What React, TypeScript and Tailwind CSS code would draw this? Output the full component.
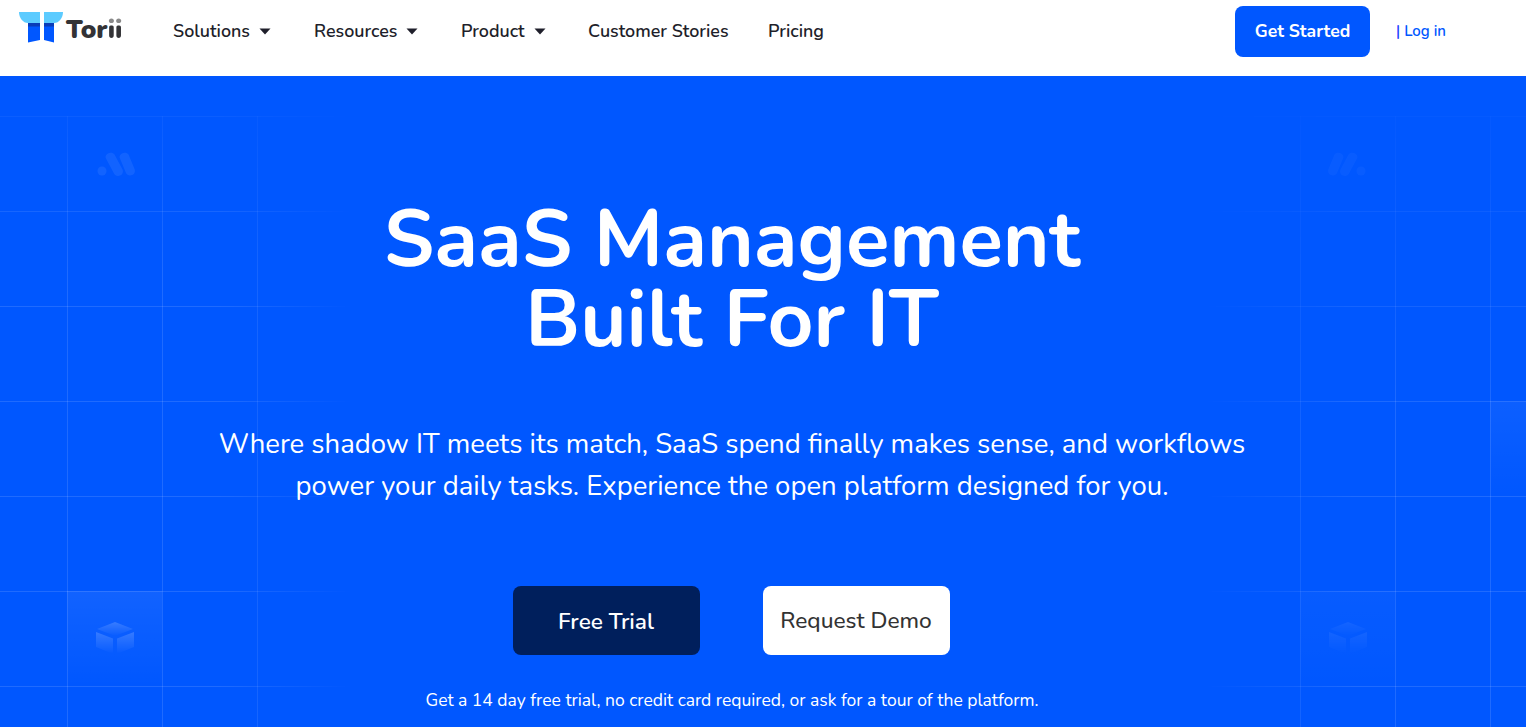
import React from 'react';

const navItems = [
  { label: 'Solutions', caret: true, className: 'w-[141px]' },
  { label: 'Resources', caret: true, className: 'w-[147px]' },
  { label: 'Product', caret: true, className: 'w-[127px]' },
  { label: 'Customer Stories', caret: false, className: 'w-[180px]' },
  { label: 'Pricing', caret: false, className: '' },
];

const Caret: React.FC = () => (
  <svg width="12" height="7" viewBox="0 0 12 7" className="ml-[9px] mt-[1px]">
    <path d="M0.5 0.5h11L6 6.5z" fill="#1f1f2b" />
  </svg>
);

const Logo: React.FC = () => (
  <svg width="45" height="31" viewBox="0 0 45 31" className="block">
    <path d="M9 9h12v19l-12 2.500z" fill="#0057ff" />
    <path d="M25 9h10v21.500L25 28z" fill="#0057ff" />
    <path d="M0 0h21v11H9C4 11 0 6 0 0z" fill="#5ccbff" />
    <path d="M25 0h19c0 6-4 11-9 11H25z" fill="#5ccbff" />
    <path d="M9 11h12v3.500H9zM25 11h10v3.500H25z" fill="#0a3cb8" />
  </svg>
);

const DotsIcon: React.FC<{ mirror?: boolean; className: string }> = ({ mirror, className }) => (
  <svg width="38" height="24" viewBox="0 0 38 24" className={className}>
    <g transform={mirror ? 'matrix(-1 0 0 1 38 0)' : undefined} fill="#fff">
      <circle cx="5" cy="19" r="4.500" />
      <path d="M11 1.500c2-1.500 5-1 6.500 1l8 15c1 2.500 0 5-2.500 6s-5 0-6-2l-8-15c-1-2 0-4 2-5z" />
      <path d="M25 1.500c2-1.500 5-1 6.500 1l6 14.500c1 2.500 0 5-2.500 6s-5 0-6-2l-6-14.500c-1-2 0-4 2-5z" />
    </g>
  </svg>
);

const BoxIcon: React.FC<{ className: string }> = ({ className }) => (
  <svg width="38" height="32" viewBox="0 0 38 32" className={className}>
    <defs>
      <linearGradient id="fade" x1="0" y1="0" x2="0" y2="1">
        <stop offset="0" stopColor="#fff" stopOpacity="0.6" />
        <stop offset="1" stopColor="#fff" stopOpacity="0" />
      </linearGradient>
    </defs>
    <path d="M19 0l18 7-18 7L1 7z" fill="url(#fade)" />
    <path d="M0 10l17 6.500V32L0 25z" fill="url(#fade)" />
    <path d="M38 10l-17 6.500V32l17-7z" fill="url(#fade)" />
  </svg>
);

const gridClass =
  'absolute bg-[linear-gradient(to_right,rgba(255,255,255,0.12)_1.5px,transparent_1.5px),linear-gradient(to_bottom,rgba(255,255,255,0.12)_1.5px,transparent_1.5px)] bg-[size:95px_95px]';

const App: React.FC = () => {
  return (
    <div className="h-[727px] overflow-hidden bg-[#0057ff] font-['Nunito','Lato',sans-serif]">
      <header className="flex h-[76px] items-start bg-white pl-[19px] pr-[80px]">
        <div className="flex w-[154px] items-start pt-[12px]">
          <Logo />
          <span className="ml-[2px] mt-[3px] text-[26px] font-black leading-[30px] text-[#333336]">
            Tor
            <span className="bg-[linear-gradient(#8a8a8a_40%,#333336_40%)] bg-clip-text text-transparent">ii</span>
          </span>
        </div>
        <nav className="flex items-center pt-[19px]">
          {navItems.map((item) => (
            <a
              key={item.label}
              className={`flex items-center text-[17.9px] font-semibold leading-[24px] text-[#1f1f2b] ${item.className}`}
            >
              {item.label}
              {item.caret && <Caret />}
            </a>
          ))}
        </nav>
        <div className="ml-auto flex items-center pt-[6px]">
          <a className="flex h-[51px] w-[135px] items-center justify-center rounded-[8px] bg-[#0057ff] text-[17.6px] font-bold text-white">
            Get Started
          </a>
          <a className="ml-[26px] text-[15px] font-semibold text-[#0057ff]">
            <span className="text-[#1a3cff]">|</span> Log in
          </a>
        </div>
      </header>

      <main className="relative h-[651px]">
        {/* faded grid panels on both sides */}
        <div className="absolute inset-0 overflow-hidden">
          <div className={`${gridClass} left-[-28px] top-[40px] h-[620px] w-[380px] [mask-image:linear-gradient(to_right,#000_65%,transparent),linear-gradient(to_bottom,rgba(0,0,0,0.35),#000_25%)] [mask-composite:intersect]`} />
          <div className={`${gridClass} left-[1205px] top-[40px] h-[620px] w-[330px] [mask-image:linear-gradient(to_right,transparent,#000_45%),linear-gradient(to_bottom,rgba(0,0,0,0.15),#000_50%)] [mask-composite:intersect]`} />
          <div className="absolute left-[67px] top-[515px] h-[95px] w-[95px] bg-gradient-to-b from-white/[0.07] to-transparent" />
          <div className="absolute left-[1300px] top-[515px] h-[95px] w-[95px] bg-gradient-to-b from-white/[0.03] to-transparent" />
          <div className="absolute left-[1490px] top-[325px] h-[95px] w-[40px] bg-gradient-to-b from-white/[0.05] to-transparent" />
          <DotsIcon className="absolute left-[97px] top-[76px] opacity-[0.07]" />
          <DotsIcon mirror className="absolute left-[1328px] top-[76px] opacity-[0.03]" />
          <BoxIcon className="absolute left-[96px] top-[546px] opacity-30" />
          <BoxIcon className="absolute left-[1329px] top-[546px] opacity-10" />
        </div>

        <div className="relative flex flex-col items-center pr-[62px] text-white">
          <h1 className="mt-[124px] text-center text-[80px] font-bold leading-[80px]">
            SaaS Management
            <br />
            Built For IT
          </h1>
          <p className="mt-[63px] text-center text-[27.5px] font-normal leading-[42px]">
            Where shadow IT meets its match, SaaS spend finally makes sense, and workflows
            <br />
            power your daily tasks. Experience the open platform designed for you.
          </p>
          <div className="mr-[2px] mt-[79px] flex gap-[63px]">
            <a className="flex h-[69px] w-[187px] items-center justify-center rounded-[8px] bg-[#001f5c] pt-[2px] text-[22.6px] font-semibold">
              Free Trial
            </a>
            <a className="flex h-[69px] w-[187px] items-center justify-center rounded-[8px] bg-white pt-[2px] text-[22.7px] font-medium text-[#333333]">
              Request Demo
            </a>
          </div>
          <p className="mt-[33px] text-[17.5px] font-normal leading-[24px]">
            Get a 14 day free trial, no credit card required, or ask for a tour of the platform.
          </p>
        </div>
      </main>
    </div>
  );
};

export default App;
